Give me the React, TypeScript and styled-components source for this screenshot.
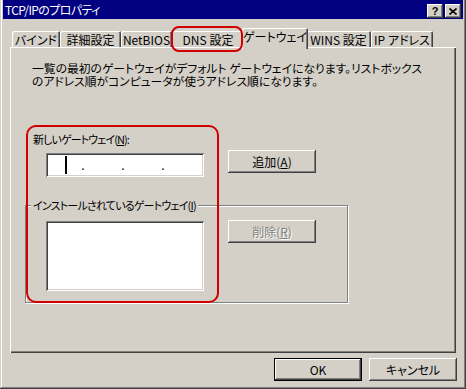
import React from "react";
import styled, { createGlobalStyle, css } from "styled-components";

const face = "#d4d0c8";

const GlobalStyle = createGlobalStyle`
  * { box-sizing: border-box; }
  html, body {
    margin: 0;
    padding: 0;
    background: ${face};
  }
  body {
    font-family: "Noto Sans CJK JP", "Noto Sans", sans-serif;
    font-size: 12px;
    font-feature-settings: "palt";
    color: #000;
  }
`;

const raised = css`
  box-shadow: inset -1px -1px #404040, inset 1px 1px #fff,
    inset -2px -2px #808080, inset 2px 2px ${face};
`;

const sunken = css`
  box-shadow: inset 1px 1px #808080, inset -1px -1px #fff,
    inset 2px 2px #404040, inset -2px -2px ${face};
`;

const Window = styled.div`
  position: relative;
  width: 466px;
  height: 389px;
  background: ${face};
  padding: 0 3px 3px;
  display: flex;
  flex-direction: column;
  box-shadow: inset -1px -1px #404040, inset 1px 0 ${face},
    inset -2px -2px #808080, inset 2px 0 #fff;
`;

const TitleBar = styled.div`
  height: 19px;
  flex-shrink: 0;
  background: #000080;
  color: #fff;
  display: flex;
  align-items: flex-start;
  padding: 0 2px;
`;

const Title = styled.span`
  flex: 1;
  line-height: 19px;
  letter-spacing: -0.6px;
  white-space: nowrap;
`;

const CaptionButton = styled.div`
  width: 16px;
  height: 14px;
  margin-top: 4px;
  margin-left: 2px;
  background: ${face};
  color: #000;
  display: flex;
  align-items: center;
  justify-content: center;
  font-family: "Liberation Sans", sans-serif;
  font-weight: bold;
  font-size: 11px;
  line-height: 1;
  ${raised};
`;

const Body = styled.div`
  flex: 1;
  display: flex;
  flex-direction: column;
  padding: 9px 7px 0 7px;
`;

const TabStrip = styled.div`
  position: relative;
  z-index: 1;
  height: 19px;
  display: flex;
  align-items: flex-end;
  padding-left: 2px;
`;

const Tab = styled.div<{ $w: number; $active?: boolean }>`
  width: ${(p) => p.$w}px;
  height: 16px;
  padding-top: 2px;
  background: ${face};
  text-align: center;
  line-height: 13px;
  white-space: nowrap;
  border-radius: 2px 2px 0 0;
  box-shadow: inset 1px 1px #fff, inset -1px 0 #404040, inset -2px 0 #808080;
  ${(p) =>
    p.$active &&
    css`
      width: ${p.$w + 4}px;
      height: 21px;
      margin: 0 -2px -2px;
      position: relative;
      z-index: 2;
    `}
`;

const Panel = styled.div`
  position: relative;
  height: 306px;
  flex-shrink: 0;
  padding: 14px 0 0 15px;
  box-shadow: inset 1px 1px #fff, inset -1px -1px #404040,
    inset -2px -2px #808080;
`;

const Description = styled.p`
  margin: 0 0 0 7px;
  line-height: 13px;
  font-size: 11.8px;
  white-space: nowrap;
`;

const NewGateway = styled.div`
  margin-top: 46px;
`;

const FieldLabel = styled.div`
  padding-left: 8px;
  height: 13px;
  line-height: 13px;
  font-size: 11px;
  letter-spacing: -0.9px;
  white-space: nowrap;
`;

const Row = styled.div`
  display: flex;
  align-items: flex-start;
  margin-top: 4px;
  padding-left: 21px;
`;

const IpField = styled.div`
  width: 158px;
  height: 24px;
  margin-top: 3px;
  background: #fff;
  display: flex;
  align-items: center;
  ${sunken};
`;

const Octet = styled.div`
  width: 34px;
  height: 100%;
  display: flex;
  align-items: center;
`;

const Caret = styled.span`
  width: 2px;
  height: 18px;
  margin-left: 19px;
  background: #000;
`;

const Dot = styled.span`
  width: 6px;
  text-align: center;
  line-height: 24px;
`;

const Button = styled.button<{ $default?: boolean }>`
  width: 88px;
  height: 23px;
  padding: 0;
  border: none;
  background: ${face};
  font: inherit;
  color: #000;
  flex-shrink: 0;
  ${raised};
  ${(p) =>
    p.$default &&
    css`
      border: 1px solid #000;
    `}
  &:disabled {
    color: #808080;
    text-shadow: 1px 1px #fff;
  }
`;

const AddButton = styled(Button)`
  margin-left: 24px;
`;

const DeleteButton = styled(Button)`
  margin-left: 24px;
  margin-top: -1px;
`;

const Group = styled.fieldset`
  margin: 22px 0 0 0;
  width: 323px;
  min-inline-size: 0;
  padding: 9px 0 11px 20px;
  border: 1px solid #808080;
  box-shadow: 1px 1px #fff, inset 1px 1px #fff;
`;

const Legend = styled.legend`
  margin-left: -15px;
  padding: 0 2px;
  height: 13px;
  line-height: 13px;
  font-size: 11px;
  letter-spacing: -0.8px;
  white-space: nowrap;
  background: ${face};
`;

const GroupRow = styled.div`
  display: flex;
  align-items: flex-start;
`;

const ListBox = styled.div`
  width: 158px;
  height: 70px;
  background: #fff;
  ${sunken};
`;

const Footer = styled.div`
  display: flex;
  justify-content: flex-end;
  gap: 7px;
  margin-top: 5px;
  margin-right: -1px;
`;

const Callout = styled.div<{ $x: number; $y: number; $w: number; $h: number; $r: number }>`
  position: absolute;
  left: ${(p) => p.$x}px;
  top: ${(p) => p.$y}px;
  width: ${(p) => p.$w}px;
  height: ${(p) => p.$h}px;
  border: 2px solid #d00000;
  border-radius: ${(p) => p.$r}px;
  pointer-events: none;
  z-index: 5;
`;

const tabs = [
  { label: "バインド", w: 48 },
  { label: "詳細設定", w: 61 },
  { label: "NetBIOS", w: 51 },
  { label: "DNS 設定", w: 72 },
  { label: "ゲートウェイ", w: 62, active: true },
  { label: "WINS 設定", w: 65 },
  { label: "IP アドレス", w: 62 },
];

const CloseGlyph = () => (
  <svg width="8" height="7" viewBox="0 0 8 7">
    <path d="M0.5 0.5 L7.5 6.5 M7.5 0.5 L0.5 6.5" stroke="#000" strokeWidth="1.6" />
  </svg>
);

const App = () => {
  return (
    <Window>
      <GlobalStyle />
      <TitleBar>
        <Title>TCP/IPのプロパティ</Title>
        <CaptionButton>?</CaptionButton>
        <CaptionButton>
          <CloseGlyph />
        </CaptionButton>
      </TitleBar>
      <Body>
        <TabStrip>
          {tabs.map((t) => (
            <Tab key={t.label} $w={t.w} $active={t.active}>
              {t.label}
            </Tab>
          ))}
        </TabStrip>
        <Panel>
          <Description>
            一覧の最初のゲートウェイがデフォルト ゲートウェイになります。リストボックス
            <br />
            のアドレス順がコンピュータが使うアドレス順になります。
          </Description>
          <NewGateway>
            <FieldLabel>
              新しいゲートウェイ(<u>N</u>):
            </FieldLabel>
            <Row>
              <IpField>
                <Octet>
                  <Caret />
                </Octet>
                <Dot>.</Dot>
                <Octet />
                <Dot>.</Dot>
                <Octet />
                <Dot>.</Dot>
                <Octet />
              </IpField>
              <AddButton>
                追加(<u>A</u>)
              </AddButton>
            </Row>
          </NewGateway>
          <Group>
            <Legend>
              インストールされているゲートウェイ(<u>I</u>)
            </Legend>
            <GroupRow>
              <ListBox />
              <DeleteButton disabled>
                削除(<u>R</u>)
              </DeleteButton>
            </GroupRow>
          </Group>
        </Panel>
        <Footer>
          <Button $default>OK</Button>
          <Button>キャンセル</Button>
        </Footer>
      </Body>
      <Callout $x={171} $y={26} $w={72} $h={26} $r={8} />
      <Callout $x={26} $y={125} $w={193} $h={178} $r={10} />
    </Window>
  );
};

export default App;
